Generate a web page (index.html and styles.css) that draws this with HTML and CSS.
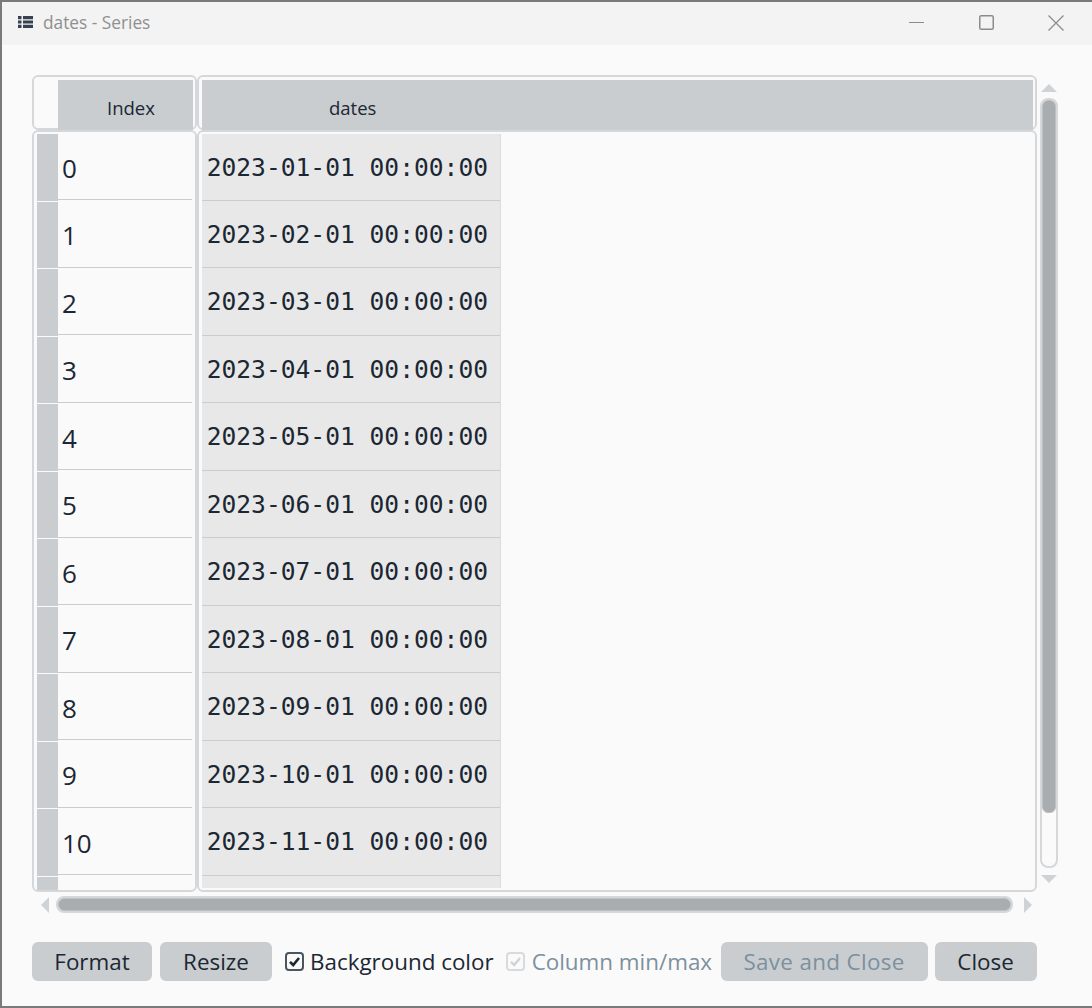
FILE: index.html
```html
<!DOCTYPE html>
<html>
	<head>
		<meta charset="utf-8" />
		<title>dates - Series</title>
		<link rel="stylesheet" href="styles.css">
	</head>
	<body>
		<div class="window">
			<div class="titlebar">
				<svg class="title-icon" width="15" height="12" viewBox="0 0 15 12">
					<path fill="#36424f" d="M0 0h3.500v3.200H0zM5 0h10v3.200H5zM0 4.400h3.500v3.200H0zM5 4.400h10v3.200H5zM0 8.800h3.500V12H0zM5 8.800h10V12H5z"/>
				</svg>
				<span class="title-text">dates - Series</span>
				<div class="win-controls">
					<svg width="15" height="15" viewBox="0 0 15 15"><path d="M0 7.500h15" stroke="#8c8c8c" stroke-width="1" fill="none"/></svg>
					<svg width="15" height="15" viewBox="0 0 15 15"><rect x="0.750" y="0.750" width="13.500" height="13.500" rx="1.500" stroke="#8c8c8c" stroke-width="1.500" fill="none"/></svg>
					<svg width="16" height="16" viewBox="0 0 16 16"><path d="M0.500 0.500l15 15M15.500 0.500l-15 15" stroke="#8c8c8c" stroke-width="1.300" fill="none"/></svg>
				</div>
			</div>

			<div class="content">
				<div class="editor">
					<div class="pane head-left">
						<div class="head-cell index-head">Index</div>
					</div>
					<div class="pane head-right">
						<div class="head-cell dates-head"><span>dates</span></div>
					</div>
					<div class="vscroll">
						<div class="arrow arrow-up"></div>
						<div class="vtrack"><div class="vthumb"></div></div>
						<div class="arrow arrow-down"></div>
					</div>

					<div class="pane body-left">
						<div class="row-heads">
							<div class="row-head"></div><div class="row-head"></div><div class="row-head"></div><div class="row-head"></div>
							<div class="row-head"></div><div class="row-head"></div><div class="row-head"></div><div class="row-head"></div>
							<div class="row-head"></div><div class="row-head"></div><div class="row-head"></div><div class="row-head"></div>
						</div>
						<div class="index-col">
							<div class="index-cell">0</div>
							<div class="index-cell">1</div>
							<div class="index-cell">2</div>
							<div class="index-cell">3</div>
							<div class="index-cell">4</div>
							<div class="index-cell">5</div>
							<div class="index-cell">6</div>
							<div class="index-cell">7</div>
							<div class="index-cell">8</div>
							<div class="index-cell">9</div>
							<div class="index-cell">10</div>
							<div class="index-cell"></div>
						</div>
					</div>
					<div class="pane body-right">
						<div class="data-col">
							<div class="data-cell">2023-01-01 00:00:00</div>
							<div class="data-cell">2023-02-01 00:00:00</div>
							<div class="data-cell">2023-03-01 00:00:00</div>
							<div class="data-cell">2023-04-01 00:00:00</div>
							<div class="data-cell">2023-05-01 00:00:00</div>
							<div class="data-cell">2023-06-01 00:00:00</div>
							<div class="data-cell">2023-07-01 00:00:00</div>
							<div class="data-cell">2023-08-01 00:00:00</div>
							<div class="data-cell">2023-09-01 00:00:00</div>
							<div class="data-cell">2023-10-01 00:00:00</div>
							<div class="data-cell">2023-11-01 00:00:00</div>
							<div class="data-cell"></div>
						</div>
					</div>

					<div class="hscroll">
						<div class="arrow arrow-left"></div>
						<div class="htrack"><div class="hthumb"></div></div>
						<div class="arrow arrow-right"></div>
					</div>
				</div>

				<div class="buttons">
					<div class="btn btn-format">Format</div>
					<div class="btn btn-resize">Resize</div>
					<div class="check check-bg">
						<svg width="19" height="19" viewBox="0 0 19 19">
							<rect x="1" y="1" width="17" height="17" rx="3" fill="#fafafa" stroke="#4a5560" stroke-width="2"/>
							<path d="M5 9.800l3.200 3.200 5.800-7" fill="none" stroke="#1b2733" stroke-width="2.600"/>
						</svg>
						<span>Background color</span>
					</div>
					<div class="check check-off">
						<svg width="19" height="19" viewBox="0 0 19 19">
							<rect x="1" y="1" width="17" height="17" rx="3" fill="#fafafa" stroke="#d8dbdd" stroke-width="2"/>
							<path d="M5 9.800l3.200 3.200 5.800-7" fill="none" stroke="#d0d3d6" stroke-width="2.400"/>
						</svg>
						<span>Column min/max</span>
					</div>
					<div class="btn btn-save">Save and Close</div>
					<div class="btn btn-close">Close</div>
				</div>
			</div>
		</div>
	</body>
</html>
```

FILE: styles.css
```css
html, body {
	margin: 0;
	padding: 0;
}

body {
	font-family: "Open Sans", "Liberation Sans", sans-serif;
	color: #1b2733;
}

.window {
	width: 1092px;
	height: 1008px;
	box-sizing: border-box;
	border: 2px solid #7a7a7a;
	border-right-width: 0;
	background: #fafafa;
	display: flex;
	flex-direction: column;
	overflow: hidden;
}

/* title bar */
.titlebar {
	height: 43px;
	flex: none;
	background: #f3f3f3;
	display: flex;
	align-items: center;
	padding-left: 16px;
}

.title-icon {
	margin: -4px 10px 0 0;
}

.title-text {
	font-size: 17.300px;
	color: #8f8f8f;
	margin-top: -3px;
}

.win-controls {
	margin: -2px 0 0 auto;
	width: 155px;
	padding-right: 28px;
	display: flex;
	justify-content: space-between;
	align-items: center;
}

/* editor grid */
.content {
	flex: 1;
	padding: 30px 0 0 30px;
}

.editor {
	display: grid;
	grid-template-columns: 165px 840px 30px;
	grid-template-rows: 55px 762px 36px;
}

.pane {
	box-sizing: border-box;
	border: 2px solid #d5d8da;
	border-radius: 6px;
	overflow: hidden;
}

.head-left,
.head-right {
	overflow: visible;
}

.head-left {
	padding: 3px 2px 0 24px;
}

.head-right {
	padding: 3px 2px 0 3px;
}

.head-cell {
	height: 50px;
	background: #c9cdd0;
	font-size: 18.500px;
	line-height: 56px;
}

.index-head {
	padding-left: 49px;
}

.dates-head {
	width: 100%;
}

.dates-head span {
	margin-left: 127px;
}

.body-left {
	display: flex;
	padding: 2px 2px 0 3px;
}

.row-heads {
	width: 21px;
	flex: none;
}

.row-head {
	height: 67.500px;
	box-sizing: border-box;
	background: #c9cdd0;
	border-bottom: 1px solid #fafafa;
}

.index-col {
	flex: 1;
	margin-top: -1.500px;
	padding-right: 1px;
}

.index-cell {
	height: 67.500px;
	box-sizing: border-box;
	border-bottom: 1px solid #c9cdd0;
	padding: 4px 0 0 4px;
	font-size: 26px;
	line-height: 62px;
}

.body-right {
	padding: 2px 0 0 3px;
}

.data-col {
	width: 298px;
	height: 754px;
	overflow: hidden;
	border-right: 1px solid #dcdcdc;
}

.data-cell {
	height: 67.500px;
	box-sizing: border-box;
	background: #e8e8e8;
	border-bottom: 1px solid #c9cdd0;
	padding-left: 4.700px;
	font-family: "DejaVu Sans Mono", "Liberation Mono", monospace;
	font-size: 24.600px;
	line-height: 67px;
}

.data-cell:first-child {
	height: 66.500px;
}

/* scrollbars */
.vscroll {
	grid-column: 3;
	grid-row: 1 / 3;
	display: flex;
	flex-direction: column;
	align-items: center;
	width: 18px;
	margin-left: 3px;
	padding-top: 9px;
}

.vtrack {
	width: 18px;
	height: 770px;
	margin: 6px 0 7px;
	box-sizing: border-box;
	border: 2px solid #d5d8da;
	border-radius: 8px;
	flex: none;
}

.vthumb {
	height: 713px;
	background: #a9adb0;
	border: 1px solid #bcc0c3;
	box-sizing: border-box;
	border-radius: 6px;
}

.hscroll {
	grid-column: 1 / 3;
	display: flex;
	align-items: center;
	padding: 4px 0 0 9px;
	height: 17px;
}

.htrack {
	width: 957px;
	height: 17px;
	margin: 0 11px 0 7px;
	box-sizing: border-box;
	border: 2px solid #d5d8da;
	border-radius: 8px;
	flex: none;
}

.hthumb {
	height: 100%;
	background: #a9adb0;
	border: 1px solid #bcc0c3;
	box-sizing: border-box;
	border-radius: 6px;
}

.arrow {
	width: 0;
	height: 0;
	flex: none;
	border-style: solid;
	border-color: transparent;
}

.arrow-up {
	border-width: 0 8px 8px;
	border-bottom-color: #d0d3d6;
}

.arrow-down {
	border-width: 8px 8px 0;
	border-top-color: #d0d3d6;
}

.arrow-left {
	border-width: 8px 8px 8px 0;
	border-right-color: #d0d3d6;
}

.arrow-right {
	border-width: 8px 0 8px 8px;
	border-left-color: #d0d3d6;
}

/* bottom row */
.buttons {
	display: flex;
	align-items: center;
	height: 39px;
	width: 1005px;
	margin-top: 14px;
	font-size: 22.400px;
}

.btn {
	height: 39px;
	line-height: 39px;
	box-sizing: border-box;
	text-align: center;
	background: #c9cdd0;
	border-radius: 6px;
	flex: none;
}

.btn-format {
	width: 120px;
}

.btn-resize {
	width: 112px;
	margin-left: 8px;
}

.check {
	display: flex;
	align-items: center;
	gap: 6.500px;
	flex: none;
	white-space: nowrap;
}

.check-bg {
	margin-left: 12.500px;
}

.check-off {
	margin-left: 12.500px;
	color: #7c909f;
}

.btn-save {
	width: 207px;
	margin-left: 8.500px;
	color: #7c909f;
	letter-spacing: 0.350px;
}

.btn-close {
	width: 102px;
	margin-left: 7px;
}
```
